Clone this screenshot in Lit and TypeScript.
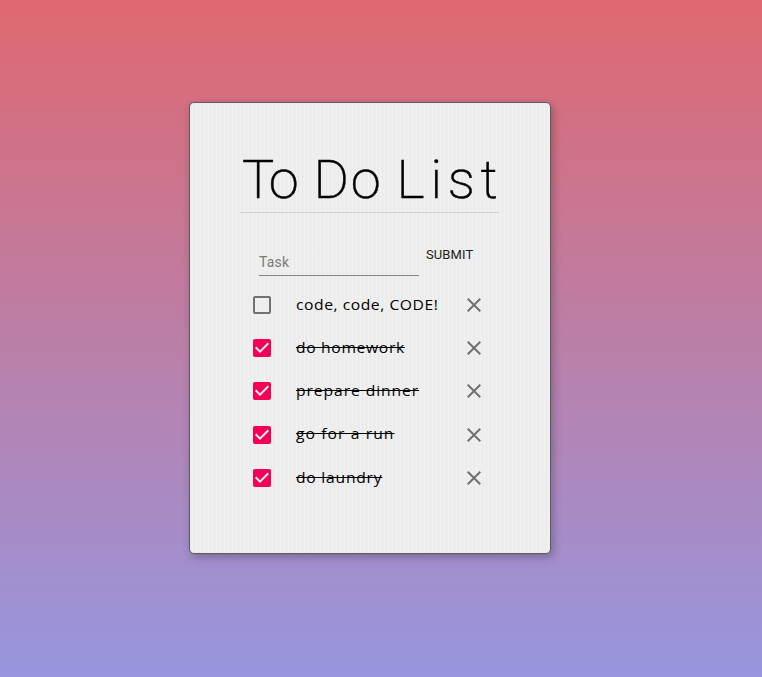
import { LitElement, html, css } from "lit";
import { customElement, state } from "lit/decorators.js";

interface Task { text: string; done: boolean; spacing: number; }

const BOX = "M19 5v14H5V5h14m0-2H5c-1.1 0-2 .9-2 2v14c0 1.1.9 2 2 2h14c1.1 0 2-.9 2-2V5c0-1.1-.9-2-2-2z";
const CHECKED = "M19 3H5c-1.11 0-2 .9-2 2v14c0 1.1.89 2 2 2h14c1.11 0 2-.9 2-2V5c0-1.1-.89-2-2-2zm-9 14l-5-5 1.41-1.41L10 14.17l7.59-7.59L19 8l-9 9z";
const CLOSE = "M19 6.41L17.59 5 12 10.59 6.41 5 5 6.41 10.59 12 5 17.59 6.41 19 12 13.41 17.59 19 19 17.59 13.41 12z";

@customElement("app-root")
export class AppRoot extends LitElement {
  static styles = css`
    :host {
      display: block;
      box-sizing: border-box;
      height: 677px;
      padding: 102px 0 0 189px;
      background: linear-gradient(#df6870, #9796df);
      font-family: Roboto, sans-serif;
      color: #000;
    }
    .card {
      box-sizing: border-box;
      width: 362px;
      height: 452px;
      padding: 45px 50px 0;
      border: 1px solid #5c5c60;
      border-radius: 5px;
      box-shadow: 2px 3px 9px rgba(0, 0, 0, 0.27);
      background:
        repeating-linear-gradient(90deg, rgba(238, 238, 238, 0.6) 0 20px, rgba(238, 238, 238, 0) 34px 42px, rgba(238, 238, 238, 0.6) 56px 71px),
        repeating-linear-gradient(90deg, rgba(0, 0, 0, 0.022) 0 1px, transparent 1px 2px, rgba(255, 255, 255, 0.25) 2px 3px, transparent 3px 4px),
        #eee;
    }
    h1 {
      display: flex;
      height: 64px;
      margin: 0;
      border-bottom: 1px solid #cfcfcf;
      width: 259px;
      font-weight: 200;
      font-size: 54px;
      line-height: 64px;
      white-space: nowrap;
      -webkit-text-stroke: 0.45px #000;
    }
    .word { flex: none; width: 71.5px; margin-left: 2px; letter-spacing: -3px; }
    .word + .word { width: 83px; margin-left: 0; letter-spacing: 2px; }
    .word:last-child { letter-spacing: 5.8px; }
    .form { display: flex; height: 63px; padding-left: 19px; }
    .field {
      box-sizing: border-box;
      width: 160px;
      height: 63px;
      padding-top: 40px;
      border-bottom: 1px solid #858585;
      color: #7b7b7b;
      font-size: 14px;
      line-height: 18px;
      letter-spacing: 0.2px;
    }
    .submit { margin: 34px 0 0 7px; font-size: 13px; line-height: 16px; color: #1c1c1c; letter-spacing: 0.1px; }
    ul { list-style: none; margin: 7.25px 0 0; padding: 0 0 0 10px; }
    li { display: flex; align-items: center; height: 43.25px; }
    svg { flex: none; width: 24px; height: 24px; fill: #717171; }
    .on { fill: #f50057; }
    .label { width: 166px; margin: 0 0 0.7px 22px; font: 14px/20px "Open Sans", sans-serif; white-space: nowrap; transform: scaleX(1.12); transform-origin: left; }
    .done { text-decoration: line-through; }
  `;

  @state() private tasks: Task[] = [
    { text: "code, code, CODE!", done: false, spacing: 0.48 },
    { text: "do homework", done: true, spacing: 0.58 },
    { text: "prepare dinner", done: true, spacing: 0.81 },
    { text: "go for a run", done: true, spacing: 0.96 },
    { text: "do laundry", done: true, spacing: 0.67 },
  ];

  private icon(d: string, cls = "") {
    return html`<svg class=${cls} viewBox="0 0 24 24"><path d=${d}></path></svg>`;
  }

  render() {
    return html`<div class="card">
      <h1><span class="word">To</span><span class="word">Do</span><span class="word">List</span></h1>
      <div class="form"><div class="field">Task</div><div class="submit">SUBMIT</div></div>
      <ul>
        ${this.tasks.map((t) => html`<li>
          ${this.icon(t.done ? CHECKED : BOX, t.done ? "on" : "")}
          <div class="label"><span class=${t.done ? "done" : ""} style="letter-spacing:${t.spacing}px">${t.text}</span></div>
          ${this.icon(CLOSE)}
        </li>`)}
      </ul>
    </div>`;
  }
}
